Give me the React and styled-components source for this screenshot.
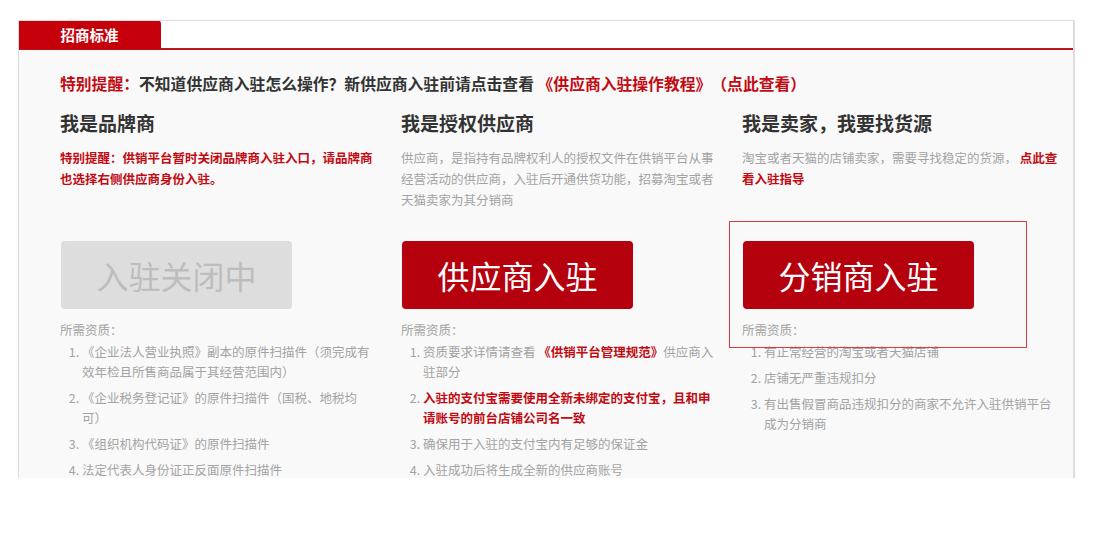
import React from "react";
import styled, { createGlobalStyle } from "styled-components";

const Global = createGlobalStyle`
  html, body { margin: 0; padding: 0; background: #fff; }
  body {
    font-family: "Noto Sans CJK SC", "Noto Sans", sans-serif;
    text-spacing-trim: space-all;
  }
`;

const RED = "#c10a12";

const Page = styled.div`
  padding: 20px 22px 0 18px;
`;

const Panel = styled.section`
  position: relative;
  width: 1057px;
  height: 458px;
  box-sizing: border-box;
  border: 1px solid #dcdcdc;
  border-width: 1px 2px 0 1px;
  background: #f9f9f9;
  overflow: hidden;
`;

const TabBar = styled.div`
  display: flex;
  height: 28px;
  background: #fff;
  border-bottom: 2px solid #c0121a;
  margin: -1px 0 0 -1px;
`;

const Tab = styled.div`
  width: 143px;
  height: 29px;
  background: #c5000b;
  border-radius: 4px 4px 0 0;
  color: #fff;
  font-size: 14.5px;
  font-weight: 700;
  display: flex;
  align-items: center;
  justify-content: center;
`;

const Body = styled.div`
  padding: 23px 0 0 41px;
`;

const Notice = styled.p`
  margin: 0;
  font-size: 15.8px;
  line-height: 22px;
  font-weight: 700;
  color: #333;
  white-space: nowrap;
`;

const Red = styled.span`
  color: ${RED};
  font-weight: ${(p) => (p.$bold ? 700 : "inherit")};
`;

const Columns = styled.div`
  display: grid;
  grid-template-columns: repeat(3, 318px);
  column-gap: 23px;
  margin-top: 15px;
`;

const Column = styled.div`
  position: relative;
`;

const Title = styled.h3`
  margin: 0;
  font-size: 19px;
  line-height: 26px;
  font-weight: 700;
  color: #333;
`;

const Desc = styled.p`
  margin: 11px 0 0;
  height: 94px;
  font-size: 12.5px;
  line-height: 21px;
  color: ${(p) => (p.$alert ? RED : "#a3a3a3")};
  font-weight: ${(p) => (p.$alert ? 700 : 400)};
`;

const JoinButton = styled.button`
  display: flex;
  align-items: center;
  justify-content: center;
  width: 231px;
  height: 68px;
  margin-left: 1px;
  border: 0;
  border-radius: 4px;
  padding: 0;
  font-family: inherit;
  font-size: 32px;
  font-weight: 400;
  background: ${(p) => (p.disabled ? "#dddddd" : "#b5000e")};
  color: ${(p) => (p.disabled ? "#bdbdbd" : "#fff")};
  cursor: ${(p) => (p.disabled ? "default" : "pointer")};
`;

const ReqLabel = styled.div`
  margin-top: 11px;
  font-size: 12.5px;
  line-height: 20px;
  color: #a3a3a3;
`;

const ReqList = styled.ol`
  margin: 2px 0 0;
  padding-left: 22px;
  font-size: 12.5px;
  line-height: 20px;
  color: #a3a3a3;
`;

const ReqItem = styled.li`
  margin-bottom: 6px;
  color: ${(p) => (p.$alert ? RED : "inherit")};
  font-weight: ${(p) => (p.$alert ? 700 : 400)};
  &::marker { color: #a3a3a3; font-weight: 400; }
`;

const Highlight = styled.div`
  position: absolute;
  left: -13px;
  top: 111px;
  width: 298px;
  height: 127px;
  box-sizing: border-box;
  border: 1.5px solid #e2383e;
  pointer-events: none;
`;

export default function App() {
  return (
    <Page>
      <Global />
      <Panel>
        <TabBar>
          <Tab>招商标准</Tab>
        </TabBar>
        <Body>
          <Notice>
            <Red>特别提醒：</Red>不知道供应商入驻怎么操作？新供应商入驻前请点击查看{" "}
            <Red>《供应商入驻操作教程》（点此查看）</Red>
          </Notice>
          <Columns>
            <Column>
              <Title>我是品牌商</Title>
              <Desc $alert>特别提醒：供销平台暂时关闭品牌商入驻入口，请品牌商也选择右侧供应商身份入驻。</Desc>
              <JoinButton disabled>入驻关闭中</JoinButton>
              <ReqLabel>所需资质：</ReqLabel>
              <ReqList>
                <ReqItem>《企业法人营业执照》副本的原件扫描件（须完成有效年检且所售商品属于其经营范围内）</ReqItem>
                <ReqItem>《企业税务登记证》的原件扫描件（国税、地税均可）</ReqItem>
                <ReqItem>《组织机构代码证》的原件扫描件</ReqItem>
                <ReqItem>法定代表人身份证正反面原件扫描件</ReqItem>
              </ReqList>
            </Column>
            <Column>
              <Title>我是授权供应商</Title>
              <Desc>供应商，是指持有品牌权利人的授权文件在供销平台从事经营活动的供应商，入驻后开通供货功能，招募淘宝或者天猫卖家为其分销商</Desc>
              <JoinButton>供应商入驻</JoinButton>
              <ReqLabel>所需资质：</ReqLabel>
              <ReqList>
                <ReqItem>
                  资质要求详情请查看 <Red $bold>《供销平台管理规范》</Red>供应商入驻部分
                </ReqItem>
                <ReqItem $alert>入驻的支付宝需要使用全新未绑定的支付宝，且和申请账号的前台店铺公司名一致</ReqItem>
                <ReqItem>确保用于入驻的支付宝内有足够的保证金</ReqItem>
                <ReqItem>入驻成功后将生成全新的供应商账号</ReqItem>
              </ReqList>
            </Column>
            <Column>
              <Title>我是卖家，我要找货源</Title>
              <Desc>
                淘宝或者天猫的店铺卖家，需要寻找稳定的货源， <Red $bold>点此查看入驻指导</Red>
              </Desc>
              <JoinButton>分销商入驻</JoinButton>
              <ReqLabel>所需资质：</ReqLabel>
              <ReqList>
                <ReqItem>有正常经营的淘宝或者天猫店铺</ReqItem>
                <ReqItem>店铺无严重违规扣分</ReqItem>
                <ReqItem>有出售假冒商品违规扣分的商家不允许入驻供销平台成为分销商</ReqItem>
              </ReqList>
              <Highlight />
            </Column>
          </Columns>
        </Body>
      </Panel>
    </Page>
  );
}
